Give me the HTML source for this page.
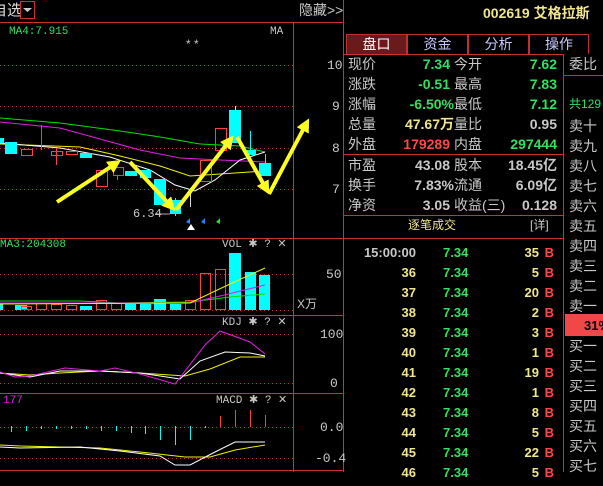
<!DOCTYPE html>
<html><head><meta charset="utf-8"><style>
*{margin:0;padding:0;box-sizing:border-box}
body{width:603px;height:472px;background:#000;overflow:hidden;position:relative;font-family:"Liberation Sans","Noto Sans CJK SC",sans-serif;font-size:13px}
.a{position:absolute;white-space:nowrap;line-height:1}
.g{color:#c8c8c8}.gr{color:#30e060}.y{color:#f0e68c}.r{color:#ff4848}.w{color:#ddd}
.mono{font-family:"Liberation Mono",monospace}
.tab{position:absolute;top:34px;height:20px;border:1px solid #c03030;border-bottom:none;color:#c8c8ff;text-align:center;line-height:19px;font-size:14px}
</style></head><body>
<div class="a w" style="left:-8px;top:3px;font-size:15px">自选</div>
<svg class="a" style="left:0;top:0" width="603" height="472">
<rect x="20" y="0" width="16" height="20" fill="#000"/>
<g stroke="#d03030" stroke-width="1" fill="none">
<line x1="0" y1="22.5" x2="343" y2="22.5"/>
<line x1="293.5" y1="22" x2="293.5" y2="472"/>
<line x1="343.5" y1="0" x2="343.5" y2="472"/>
<line x1="0" y1="238.5" x2="343" y2="238.5"/>
<line x1="0" y1="315.5" x2="343" y2="315.5"/>
<line x1="0" y1="393.5" x2="343" y2="393.5"/>
<line x1="0" y1="470.5" x2="343" y2="470.5"/>
<line x1="343" y1="54.5" x2="563" y2="54.5"/>
<line x1="343" y1="154.5" x2="563" y2="154.5"/>
<line x1="343" y1="215.5" x2="563" y2="215.5"/>
<line x1="343" y1="238.5" x2="563" y2="238.5"/>
<line x1="563.5" y1="54" x2="563.5" y2="472"/>
<line x1="563" y1="75.5" x2="603" y2="75.5"/>
<rect x="20.5" y="1.5" width="14" height="17"/>
</g>
<path d="M23 8h9l-4.5 4z" fill="#ccc"/>
<g stroke="#b03030" stroke-dasharray="1,3">
<line x1="0" y1="65.5" x2="293" y2="65.5"/><line x1="0" y1="106.5" x2="293" y2="106.5"/>
<line x1="0" y1="148.5" x2="293" y2="148.5"/><line x1="0" y1="189.5" x2="293" y2="189.5"/>
<line x1="0" y1="274.5" x2="293" y2="274.5"/><line x1="0" y1="310.5" x2="293" y2="310.5"/>
<line x1="0" y1="334.5" x2="293" y2="334.5"/><line x1="0" y1="383.5" x2="293" y2="383.5"/>
<line x1="0" y1="427.5" x2="293" y2="427.5"/><line x1="0" y1="458.5" x2="293" y2="458.5"/>
</g>
<polyline fill="none" stroke="#00e000" points="0,118 60,123 120,131 160,137 200,144 240,146 265,152"/>
<polyline fill="none" stroke="#e020e0" points="0,122 60,128 100,139 140,150 180,158 220,160 265,162"/>
<polyline fill="none" stroke="#f0f000" points="0,144 80,147 120,156 160,166 190,176 220,174 265,171"/>
<polyline fill="none" stroke="#fff" points="0,143 60,148 110,157 150,170 175,185 195,191 215,180 240,160 265,152"/>
<g fill="#00ffff">
<rect x="0" y="138" width="4" height="5"/><rect x="5" y="142" width="12" height="12"/>
<rect x="80" y="153" width="12" height="5"/><rect x="125" y="171" width="12" height="5"/>
<rect x="140" y="170" width="11" height="8"/><rect x="154" y="179" width="12" height="26"/>
<rect x="170" y="200" width="11" height="14"/><rect x="229" y="110" width="12" height="33"/>
<rect x="245" y="150" width="11" height="5"/><rect x="259" y="163" width="12" height="13"/>
</g>
<g stroke="#00ffff"><line x1="250.5" y1="131" x2="250.5" y2="150"/><line x1="265.5" y1="154" x2="265.5" y2="163"/><line x1="175.5" y1="198" x2="175.5" y2="216"/></g>
<g fill="none" stroke="#ff4040">
<rect x="21.5" y="149.5" width="11" height="6"/><rect x="51.5" y="151.5" width="11" height="4"/>
<rect x="66.5" y="151.5" width="11" height="3"/><rect x="96.5" y="170.5" width="11" height="16"/>
<rect x="113.5" y="167.5" width="10" height="8"/><rect x="200.5" y="160.5" width="11" height="21"/>
<rect x="215.5" y="128.5" width="11" height="22"/>
<line x1="41.5" y1="125" x2="41.5" y2="150"/><line x1="56.5" y1="148" x2="56.5" y2="165"/><line x1="117.5" y1="175" x2="117.5" y2="180"/>
</g>
<line x1="190.5" y1="188" x2="190.5" y2="207" stroke="#ddd"/>
<line x1="235.5" y1="106" x2="235.5" y2="110" stroke="#ddd"/>
<defs><marker id="ah" viewBox="0 0 10 10" refX="2" refY="5" markerWidth="3.4" markerHeight="3.4" orient="auto"><path d="M0 0L10 5L0 10z" fill="#ffff20"/></marker></defs>
<g stroke="#ffff20" stroke-width="4" marker-end="url(#ah)" fill="none">
<line x1="57" y1="202" x2="112" y2="166"/>
<line x1="130" y1="162" x2="168" y2="203"/>
<line x1="176" y1="210" x2="227" y2="144"/>
<line x1="237" y1="137" x2="264" y2="185"/>
<line x1="269" y1="194" x2="304" y2="128"/>
</g>
<line x1="155" y1="214" x2="170" y2="214" stroke="#aaa"/>
<path d="M191 224l-4 6h8z" fill="#fff"/>
<path d="M186 222l4-4v6z M201 222l4-4v6z" fill="#2080ff"/><path d="M216 222l4-4v6z" fill="#20e020"/>
<g fill="#00ffff">
<rect x="0" y="304" width="3" height="6"/><rect x="15" y="305" width="12" height="5"/><rect x="80" y="306" width="12" height="4"/>
<rect x="125" y="304" width="11" height="6"/><rect x="140" y="304" width="11" height="6"/><rect x="154" y="299" width="12" height="11"/>
<rect x="170" y="304" width="11" height="6"/><rect x="229" y="253" width="12" height="57"/><rect x="245" y="272" width="11" height="38"/><rect x="259" y="275" width="11" height="35"/>
</g>
<g fill="none" stroke="#ff4040">
<rect x="21.5" y="306.5" width="10" height="3"/><rect x="36.5" y="303.5" width="10" height="6"/><rect x="51.5" y="304.5" width="10" height="5"/>
<rect x="66.5" y="305.5" width="10" height="4"/><rect x="96.5" y="300.5" width="10" height="9"/><rect x="111.5" y="303.5" width="10" height="6"/>
<rect x="185.5" y="300.5" width="10" height="9"/><rect x="200.5" y="273.5" width="10" height="36"/><rect x="215.5" y="269.5" width="10" height="40"/>
</g>
<polyline fill="none" stroke="#00e000" points="0,301 80,301 120,303 190,302 230,297 265,294"/>
<polyline fill="none" stroke="#e020e0" points="0,303 190,303 220,296 265,285"/>
<polyline fill="none" stroke="#f0f000" points="0,304 190,303 230,284 265,268"/>
<polyline fill="none" stroke="#f0f000" points="0,373 30,375 60,373 100,371 140,373 185,376 210,369 240,357 265,357"/>
<polyline fill="none" stroke="#fff" points="0,373 30,377 60,371 100,371 140,373 180,379 200,361 225,352 250,353 265,356"/>
<polyline fill="none" stroke="#e020e0" points="0,372 15,377 30,376 65,368 100,371 115,368 140,374 175,384 205,345 220,331 250,342 265,354"/>
<g stroke="#00ffff"><line x1="11.5" y1="426" x2="11.5" y2="432"/><line x1="26.5" y1="426" x2="26.5" y2="431"/><line x1="41.5" y1="426" x2="41.5" y2="429"/><line x1="56.5" y1="426" x2="56.5" y2="429"/><line x1="71.5" y1="426" x2="71.5" y2="429"/><line x1="86.5" y1="426" x2="86.5" y2="429"/><line x1="101.5" y1="426" x2="101.5" y2="431"/><line x1="116.5" y1="426" x2="116.5" y2="431"/><line x1="131.5" y1="426" x2="131.5" y2="433"/><line x1="145.5" y1="426" x2="145.5" y2="434"/><line x1="160.5" y1="426" x2="160.5" y2="440"/><line x1="175.5" y1="426" x2="175.5" y2="445"/><line x1="190.5" y1="426" x2="190.5" y2="440"/><line x1="205.5" y1="426" x2="205.5" y2="428"/></g>
<g stroke="#ff4040"><line x1="220.5" y1="416" x2="220.5" y2="427"/><line x1="235.5" y1="410" x2="235.5" y2="427"/><line x1="250.5" y1="410" x2="250.5" y2="427"/><line x1="265.5" y1="415" x2="265.5" y2="427"/></g>
<polyline fill="none" stroke="#f0f000" points="0,445 20,446 100,448 140,452 185,457 210,457 235,450 265,445"/>
<polyline fill="none" stroke="#fff" points="0,447 20,448 80,447 120,451 160,456 175,465 190,465 215,452 235,442 265,442"/>
</svg>
<div class="a g" style="left:299px;top:3px;font-size:14px">隐藏&gt;&gt;</div>
<div class="a gr mono" style="left:9px;top:27px;font-size:11px">MA4:7.915</div>
<div class="a g mono" style="left:270px;top:27px;font-size:11px">MA</div>
<div class="a g" style="left:186px;top:38px;font-size:12px">* *</div>
<div class="a g mono" style="left:133px;top:208px;font-size:12px">6.34</div>
<div class="a g mono" style="left:327px;top:59px;font-size:13px">10</div>
<div class="a g mono" style="left:332px;top:100px">9</div>
<div class="a g mono" style="left:332px;top:142px">8</div>
<div class="a g mono" style="left:332px;top:183px">7</div>
<div class="a gr mono" style="left:0;top:240px;font-size:11px">MA3:204308</div>
<div class="a g mono" style="left:222px;top:240px;font-size:11px">VOL ✱ ? ✕</div>
<div class="a g mono" style="left:326px;top:268px">50</div>
<div class="a g" style="left:297px;top:298px;font-size:12px">X万</div>
<div class="a g mono" style="left:222px;top:318px;font-size:11px">KDJ ✱ ? ✕</div>
<div class="a g mono" style="left:320px;top:328px">100</div>
<div class="a g mono" style="left:330px;top:377px">0</div>
<div class="a mono" style="left:3px;top:396px;font-size:11px;color:#e020e0">177</div>
<div class="a g mono" style="left:216px;top:396px;font-size:11px">MACD ✱ ? ✕</div>
<div class="a g mono" style="left:320px;top:421px">0.0</div>
<div class="a g mono" style="left:315px;top:452px">-0.4</div>
<div class="a y" style="left:483px;top:6px;font-size:14px;font-weight:bold">002619 艾格拉斯</div>
<div class="tab" style="left:346px;width:61px;background:#6a1a1a;color:#fff">盘口</div>
<div class="tab" style="left:407px;width:61px">资金</div>
<div class="tab" style="left:468px;width:61px">分析</div>
<div class="tab" style="left:529px;width:60px">操作</div>
<div style="position:absolute;left:348px;top:57px;width:212px;font-size:14px;line-height:20px">
<div style="position:relative;height:20px"><span class="a g" style="left:0">现价</span><span class="a gr" style="right:110px;font-weight:bold">7.34</span><span class="a g" style="left:106px">今开</span><span class="a gr" style="right:3px;font-weight:bold">7.62</span></div>
<div style="position:relative;height:20px"><span class="a g" style="left:0">涨跌</span><span class="a gr" style="right:110px;font-weight:bold">-0.51</span><span class="a g" style="left:106px">最高</span><span class="a gr" style="right:3px;font-weight:bold">7.83</span></div>
<div style="position:relative;height:20px"><span class="a g" style="left:0">涨幅</span><span class="a gr" style="right:106px;font-weight:bold">-6.50%</span><span class="a g" style="left:106px">最低</span><span class="a gr" style="right:3px;font-weight:bold">7.12</span></div>
<div style="position:relative;height:20px"><span class="a g" style="left:0">总量</span><span class="a y" style="right:106px;font-weight:bold">47.67万</span><span class="a g" style="left:106px">量比</span><span class="a g" style="right:3px;font-weight:bold">0.95</span></div>
<div style="position:relative;height:20px"><span class="a g" style="left:0">外盘</span><span class="a r" style="right:110px;font-weight:bold">179289</span><span class="a g" style="left:106px">内盘</span><span class="a gr" style="right:3px;font-weight:bold">297444</span></div>
<div style="position:relative;height:20px;margin-top:1px"><span class="a g" style="left:0">市盈</span><span class="a g" style="right:110px;font-weight:bold">43.08</span><span class="a g" style="left:106px">股本</span><span class="a g" style="right:3px;font-weight:bold">18.45亿</span></div>
<div style="position:relative;height:20px"><span class="a g" style="left:0">换手</span><span class="a g" style="right:106px;font-weight:bold">7.83%</span><span class="a g" style="left:106px">流通</span><span class="a g" style="right:3px;font-weight:bold">6.09亿</span></div>
<div style="position:relative;height:20px"><span class="a g" style="left:0">净资</span><span class="a g" style="right:110px;font-weight:bold">3.05</span><span class="a g" style="left:106px">收益(三)</span><span class="a g" style="right:3px;font-weight:bold">0.128</span></div>
</div>
<div class="a y" style="left:408px;top:219px;font-size:12px">逐笔成交</div>
<div class="a g" style="left:530px;top:219px;font-size:12px">[详]</div>
<div style="position:absolute;left:344px;top:246px;width:219px;font-size:13px;font-weight:bold;line-height:20px">
<div style="position:relative;height:20px"><span class="a g" style="right:147px">15:00:00</span><span class="a gr" style="left:99px">7.34</span><span class="a y" style="right:24px">35</span><span class="a r" style="right:9px">B</span></div>
<div style="position:relative;height:20px"><span class="a y" style="right:147px">36</span><span class="a gr" style="left:99px">7.34</span><span class="a y" style="right:24px">5</span><span class="a r" style="right:9px">B</span></div>
<div style="position:relative;height:20px"><span class="a y" style="right:147px">37</span><span class="a gr" style="left:99px">7.34</span><span class="a y" style="right:24px">20</span><span class="a r" style="right:9px">B</span></div>
<div style="position:relative;height:20px"><span class="a y" style="right:147px">38</span><span class="a gr" style="left:99px">7.34</span><span class="a y" style="right:24px">2</span><span class="a r" style="right:9px">B</span></div>
<div style="position:relative;height:20px"><span class="a y" style="right:147px">39</span><span class="a gr" style="left:99px">7.34</span><span class="a y" style="right:24px">3</span><span class="a r" style="right:9px">B</span></div>
<div style="position:relative;height:20px"><span class="a y" style="right:147px">40</span><span class="a gr" style="left:99px">7.34</span><span class="a y" style="right:24px">1</span><span class="a r" style="right:9px">B</span></div>
<div style="position:relative;height:20px"><span class="a y" style="right:147px">41</span><span class="a gr" style="left:99px">7.34</span><span class="a y" style="right:24px">19</span><span class="a r" style="right:9px">B</span></div>
<div style="position:relative;height:20px"><span class="a y" style="right:147px">42</span><span class="a gr" style="left:99px">7.34</span><span class="a y" style="right:24px">1</span><span class="a r" style="right:9px">B</span></div>
<div style="position:relative;height:20px"><span class="a y" style="right:147px">43</span><span class="a gr" style="left:99px">7.34</span><span class="a y" style="right:24px">8</span><span class="a r" style="right:9px">B</span></div>
<div style="position:relative;height:20px"><span class="a y" style="right:147px">44</span><span class="a gr" style="left:99px">7.34</span><span class="a y" style="right:24px">5</span><span class="a r" style="right:9px">B</span></div>
<div style="position:relative;height:20px"><span class="a y" style="right:147px">45</span><span class="a gr" style="left:99px">7.34</span><span class="a y" style="right:24px">22</span><span class="a r" style="right:9px">B</span></div>
<div style="position:relative;height:20px"><span class="a y" style="right:147px">46</span><span class="a gr" style="left:99px">7.34</span><span class="a y" style="right:24px">5</span><span class="a r" style="right:9px">B</span></div>
</div>
<div class="a g" style="left:569px;top:57px;font-size:14px">委比</div>
<div class="a gr" style="left:569px;top:98px;font-size:12px">共129</div>
<div style="position:absolute;left:569px;top:116px;font-size:14px;line-height:20px;color:#c8c8c8">卖十<br>卖九<br>卖八<br>卖七<br>卖六<br>卖五</div>
<div style="position:absolute;left:569px;top:236px;font-size:14px;line-height:20px;color:#c8c8c8">卖四<br>卖三<br>卖二<br>卖一</div>
<div class="a" style="left:565px;top:314px;width:38px;height:22px;background:#f04848;color:#000;font-weight:bold;font-size:13px;padding:5px 0 0 19px">31%</div>
<div style="position:absolute;left:569px;top:336px;font-size:14px;line-height:20px;color:#c8c8c8">买一<br>买二<br>买三<br>买四<br>买五<br>买六<br>买七</div>
</body></html>
